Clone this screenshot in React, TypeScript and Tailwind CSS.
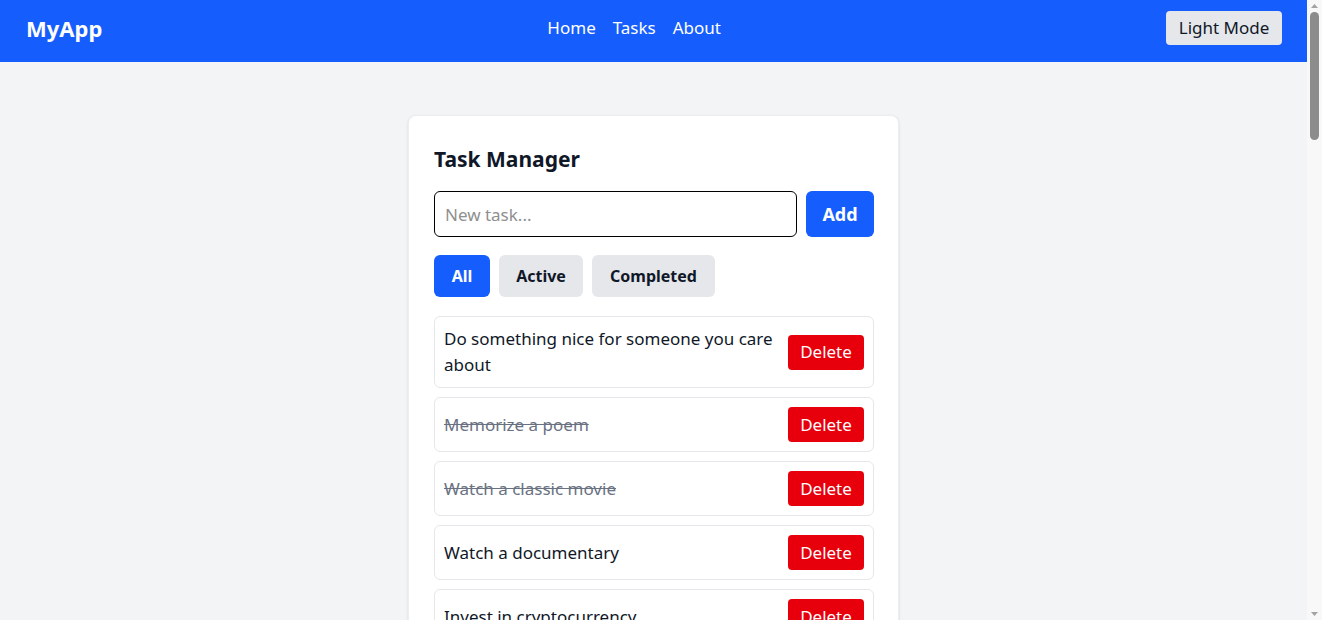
import React from "react";

const tasks = [
  { text: "Do something nice for someone you care about", done: false },
  { text: "Memorize a poem", done: true },
  { text: "Watch a classic movie", done: true },
  { text: "Watch a documentary", done: false },
  { text: "Invest in cryptocurrency", done: false },
  { text: "Contribute code or a monetary donation to an open-source software project", done: false },
];

function FakeScrollbar() {
  return (
    <div className="w-[15px] shrink-0 h-screen bg-[#f8f8f8] flex flex-col items-center">
      <svg width="15" height="12" viewBox="0 0 15 12" className="shrink-0">
        <path d="M4 8 L7.5 4 L11 8 Z" fill="#a3a3a3" />
      </svg>
      <div className="w-[9px] h-[128px] rounded-full bg-[#8c8c8c]" />
      <div className="flex-1" />
      <svg width="15" height="12" viewBox="0 0 15 12" className="shrink-0">
        <path d="M4 4 L7.5 8 L11 4 Z" fill="#a3a3a3" />
      </svg>
    </div>
  );
}

export default function App() {
  return (
    <div
      className="h-screen overflow-hidden flex bg-[#f3f4f6] text-[#101828]"
      style={{ fontFamily: '"Segoe UI", "Noto Sans", sans-serif' }}
    >
      <div className="flex-1 min-w-0 h-screen overflow-hidden">
        <header className="bg-[#155dfc] pl-[26px] pr-[25px] pt-[11px] pb-[17px] flex items-center justify-between text-white">
          <div className="text-[22px] font-bold leading-[34px]">MyApp</div>
          <nav className="flex gap-[17px] text-[17px]">
            <a>Home</a>
            <a>Tasks</a>
            <a>About</a>
          </nav>
          <button className="bg-[#e5e7eb] text-[#101828] text-[17px] w-[116px] h-[34px] rounded">Light Mode</button>
        </header>
        <main className="pt-[53px] pb-12">
          <div className="w-[491px] mx-auto bg-white rounded-lg border border-[#eceef1] shadow-sm pt-6 pb-6 pl-[25px] pr-6">
            <h1 className="text-[21px] font-bold mt-[5px] mb-[18px] leading-7">Task Manager</h1>
            <div className="flex gap-[9px] mb-[18px]">
              <input
                className="flex-1 min-w-0 h-[46px] border border-black rounded-md px-2.5 text-[17px] placeholder-[#8f8f8f] outline-none"
                placeholder="New task..."
              />
              <button className="w-[68px] h-[46px] bg-[#155dfc] text-white text-lg font-bold rounded-md">Add</button>
            </div>
            <div className="flex gap-[9px] mb-[19px]">
              <button className="h-[42px] w-[56px] rounded-md bg-[#155dfc] text-white text-base font-bold">All</button>
              <button className="h-[42px] w-[84px] rounded-md bg-[#e5e7eb] text-base font-bold">Active</button>
              <button className="h-[42px] w-[123px] rounded-md bg-[#e5e7eb] text-base font-bold">Completed</button>
            </div>
            <ul className="flex flex-col gap-[9px]">
              {tasks.map((t) => (
                <li
                  key={t.text}
                  className="flex items-center justify-between gap-2 border border-[#e5e7eb] rounded-md p-[9px]"
                >
                  <span className={"text-[17px] leading-[26px] " + (t.done ? "line-through text-[#6a7282]" : "")}>
                    {t.text}
                  </span>
                  <button className="shrink-0 bg-[#e7000b] text-white text-[17px] w-[76px] h-[35px] rounded">Delete</button>
                </li>
              ))}
            </ul>
          </div>
        </main>
      </div>
      <FakeScrollbar />
    </div>
  );
}
